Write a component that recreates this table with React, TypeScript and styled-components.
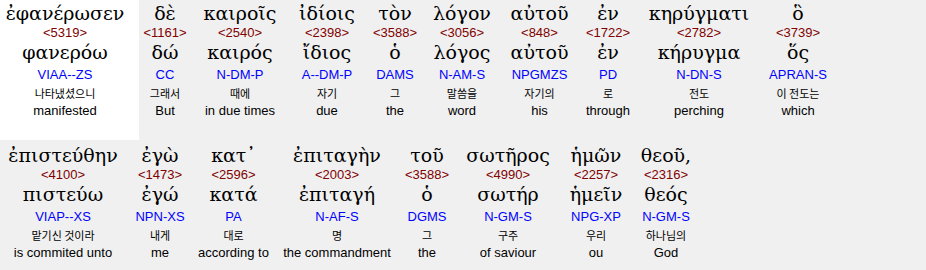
import React from 'react';
import styled, { createGlobalStyle } from 'styled-components';

const GlobalStyle = createGlobalStyle`
  html, body {
    margin: 0;
    padding: 0;
    background: #f0f0f0;
  }
  body {
    font-family: "Liberation Sans", Arial, sans-serif;
    color: #000;
  }
`;

const Page = styled.div`
  width: 926px;
  height: 270px;
  overflow: hidden;
  background: #f0f0f0;
`;

const Verse = styled.div`
  display: flex;
  flex-direction: row;
  align-items: flex-start;
  & + & {
    margin-top: 2px;
  }
`;

const WordCell = styled.div<{ $width: number; $active?: boolean }>`
  box-sizing: border-box;
  flex: 0 0 auto;
  width: ${(p) => p.$width}px;
  height: 140px;
  padding: 1px ${(p) => (p.$active ? 9 : 0)}px 0 0;
  display: flex;
  flex-direction: column;
  align-items: center;
  white-space: nowrap;
  background: ${(p) => (p.$active ? '#ffffff' : 'transparent')};
`;

const Greek = styled.div`
  font-family: "DejaVu Serif", serif;
  font-size: 19px;
  line-height: 24px;
`;

const Strong = styled.div`
  font-size: 13px;
  line-height: 16px;
  color: #800000;
`;

const Lemma = styled.div`
  font-family: "DejaVu Serif", serif;
  font-size: 19px;
  line-height: 23px;
`;

const Morph = styled.div`
  font-size: 13px;
  line-height: 21px;
  color: #0000ff;
`;

const Korean = styled.div`
  font-family: "Noto Sans CJK KR", sans-serif;
  font-size: 11px;
  line-height: 17px;
`;

const English = styled.div`
  font-size: 13px;
  line-height: 17px;
`;

type Word = {
  greek: string;
  strong: string;
  lemma: string;
  morph: string;
  korean: string;
  english: string;
  width: number;
  active?: boolean;
};

const line1: Word[] = [
  { greek: 'ἐφανέρωσεν', strong: '5319', lemma: 'φανερόω', morph: 'VIAA--ZS', korean: '나타냈셨으니', english: 'manifested', width: 139, active: true },
  { greek: 'δὲ', strong: '1161', lemma: 'δώ', morph: 'CC', korean: '그래서', english: 'But', width: 52 },
  { greek: 'καιροῖς', strong: '2540', lemma: 'καιρός', morph: 'N-DM-P', korean: '때에', english: 'in due times', width: 98 },
  { greek: 'ἰδίοις', strong: '2398', lemma: 'ἴδιος', morph: 'A--DM-P', korean: '자기', english: 'due', width: 76 },
  { greek: 'τὸν', strong: '3588', lemma: 'ὁ', morph: 'DAMS', korean: '그', english: 'the', width: 60 },
  { greek: 'λόγον', strong: '3056', lemma: 'λόγος', morph: 'N-AM-S', korean: '말씀을', english: 'word', width: 74 },
  { greek: 'αὐτοῦ', strong: '848', lemma: 'αὐτοῦ', morph: 'NPGMZS', korean: '자기의', english: 'his', width: 81 },
  { greek: 'ἐν', strong: '1722', lemma: 'ἐν', morph: 'PD', korean: '로', english: 'through', width: 56 },
  { greek: 'κηρύγματι', strong: '2782', lemma: 'κήρυγμα', morph: 'N-DN-S', korean: '전도', english: 'perching', width: 126 },
  { greek: 'ὃ', strong: '3739', lemma: 'ὅς', morph: 'APRAN-S', korean: '이 전도는', english: 'which', width: 72 },
];

const line2: Word[] = [
  { greek: 'ἐπιστεύθην', strong: '4100', lemma: 'πιστεύω', morph: 'VIAP--XS', korean: '맡기신 것이라', english: 'is commited unto', width: 126 },
  { greek: 'ἐγὼ', strong: '1473', lemma: 'ἐγώ', morph: 'NPN-XS', korean: '내게', english: 'me', width: 68 },
  { greek: 'κατ᾽', strong: '2596', lemma: 'κατά', morph: 'PA', korean: '대로', english: 'according to', width: 79 },
  { greek: 'ἐπιταγὴν', strong: '2003', lemma: 'ἐπιταγή', morph: 'N-AF-S', korean: '명', english: 'the commandment', width: 128 },
  { greek: 'τοῦ', strong: '3588', lemma: 'ὁ', morph: 'DGMS', korean: '그', english: 'the', width: 52 },
  { greek: 'σωτῆρος', strong: '4990', lemma: 'σωτήρ', morph: 'N-GM-S', korean: '구주', english: 'of saviour', width: 110 },
  { greek: 'ἡμῶν', strong: '2257', lemma: 'ἡμεῖν', morph: 'NPG-XP', korean: '우리', english: 'ou', width: 66 },
  { greek: 'θεοῦ,', strong: '2316', lemma: 'θεός', morph: 'N-GM-S', korean: '하나님의', english: 'God', width: 74 },
];

function Interlinear({ word }: { word: Word }) {
  return (
    <WordCell $width={word.width} $active={word.active}>
      <Greek>{word.greek}</Greek>
      <Strong>&lt;{word.strong}&gt;</Strong>
      <Lemma>{word.lemma}</Lemma>
      <Morph>{word.morph}</Morph>
      <Korean>{word.korean}</Korean>
      <English>{word.english}</English>
    </WordCell>
  );
}

function App() {
  return (
    <Page>
      <GlobalStyle />
      <Verse>
        {line1.map((w, i) => (
          <Interlinear key={i} word={w} />
        ))}
      </Verse>
      <Verse>
        {line2.map((w, i) => (
          <Interlinear key={i} word={w} />
        ))}
      </Verse>
    </Page>
  );
}

export default App;
